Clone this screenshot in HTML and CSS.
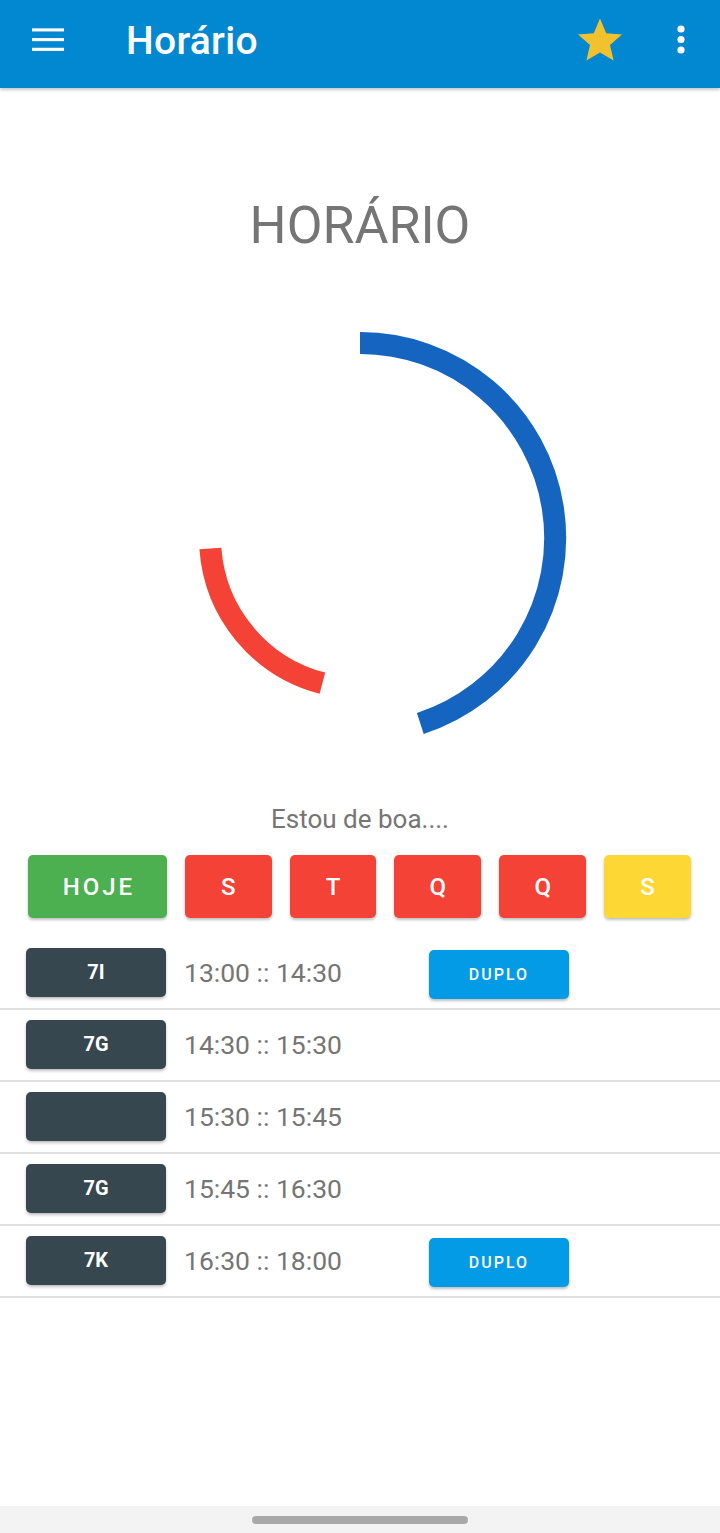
FILE: index.html
```
<!DOCTYPE html>
<html lang="pt">
<head>
<meta charset="utf-8">
<title>Horário</title>
<link rel="stylesheet" href="styles.css">
</head>
<body>
<div class="screen">
  <header class="topbar">
    <div class="menu-btn" aria-label="menu">
      <svg width="34" height="24" viewBox="0 0 34 24"><rect x="0" y="0" width="33" height="3.2" fill="#fff"/><rect x="0" y="10" width="33" height="3.2" fill="#fff"/><rect x="0" y="20" width="33" height="3.2" fill="#fff"/></svg>
    </div>
    <h1 class="title">Horário</h1>
    <div class="actions">
      <svg class="star" width="48" height="46" viewBox="0 0 24 23"><path d="M12 0.8l3.1 7.3 7.9 0.7-6 5.2 1.8 7.8L12 17.7l-6.8 4.1 1.8-7.8-6-5.2 7.9-0.7z" fill="#f2c12e"/></svg>
      <svg class="more" width="10" height="30" viewBox="0 0 10 30"><circle cx="5" cy="4" r="3.6" fill="#fff"/><circle cx="5" cy="14.5" r="3.6" fill="#fff"/><circle cx="5" cy="25" r="3.6" fill="#fff"/></svg>
    </div>
  </header>

  <main class="content">
    <h2 class="heading">HORÁRIO</h2>
    <div class="clock">
      <svg width="440" height="440" viewBox="0 0 440 440">
        <path d="M220 25 A195 195 0 0 1 280.3 405.5" fill="none" stroke="#1565c0" stroke-width="22"/>
        <path d="M70.4 230.5 A150 150 0 0 0 182.4 365.2" fill="none" stroke="#f44336" stroke-width="22"/>
      </svg>
    </div>
    <p class="status">Estou de boa....</p>
    <div class="days">
      <div class="day day-today">HOJE</div>
      <div class="day day-red">S</div>
      <div class="day day-red">T</div>
      <div class="day day-red">Q</div>
      <div class="day day-red">Q</div>
      <div class="day day-yellow">S</div>
    </div>
    <ul class="schedule">
      <li class="row"><span class="badge">7I</span><span class="time">13:00 :: 14:30</span><span class="duplo">DUPLO</span></li>
      <li class="row"><span class="badge">7G</span><span class="time">14:30 :: 15:30</span></li>
      <li class="row"><span class="badge"></span><span class="time">15:30 :: 15:45</span></li>
      <li class="row"><span class="badge">7G</span><span class="time">15:45 :: 16:30</span></li>
      <li class="row"><span class="badge">7K</span><span class="time">16:30 :: 18:00</span><span class="duplo">DUPLO</span></li>
    </ul>
  </main>

  <footer class="navbar"><div class="handle"></div></footer>
</div>
</body>
</html>
```

FILE: styles.css
```
* { box-sizing: border-box; }
html, body { margin: 0; padding: 0; }
body {
  font-family: Roboto, "Noto Sans", "Liberation Sans", sans-serif;
  background: #fff;
  width: 720px;
  height: 1533px;
  overflow: hidden;
}
.screen {
  width: 720px;
  height: 1533px;
  display: flex;
  flex-direction: column;
}
.topbar {
  height: 88px;
  flex: none;
  background: #0288d1;
  display: flex;
  align-items: center;
  box-shadow: 0 2px 3px rgba(0,0,0,0.22);
  position: relative;
  z-index: 2;
}
.menu-btn {
  width: 33px;
  margin-left: 32px;
  margin-top: -8px;
  display: flex;
}
.title {
  margin: -6px 0 0 61px;
  color: #fff;
  font-size: 39px;
  font-weight: 500;
  line-height: 44px;
  letter-spacing: 0.3px;
}
.actions {
  margin-left: auto;
  display: flex;
  align-items: center;
  margin-right: 34px;
  margin-top: -8px;
}
.star { margin-right: 52px; }
.content {
  flex: 1;
  display: flex;
  flex-direction: column;
  align-items: center;
}
.heading {
  margin: 108px 0 0;
  font-size: 52px;
  line-height: 60px;
  font-weight: 400;
  color: #757575;
}
.clock {
  margin-top: 62px;
  height: 440px;
  display: flex;
}
.status {
  margin: 46px 0 0;
  font-size: 26px;
  line-height: 30px;
  color: #757575;
}
.days {
  margin-top: 21px;
  width: 720px;
  padding: 0 29px 0 28px;
  display: flex;
  gap: 18px;
}
.day {
  height: 63px;
  width: 87px;
  border-radius: 5px;
  color: #fff;
  font-size: 24px;
  font-weight: 500;
  display: flex;
  align-items: center;
  justify-content: center;
  box-shadow: 0 2px 3px rgba(0,0,0,0.25);
}
.day-today { width: 139px; background: #4caf50; letter-spacing: 3px; padding-left: 3px; }
.day-red { background: #f44336; }
.day-yellow { background: #fdd835; }
.schedule {
  list-style: none;
  margin: 20px 0 0;
  padding: 0;
  width: 720px;
}
.row {
  height: 72px;
  border-bottom: 2px solid #e0e0e0;
  display: flex;
  align-items: center;
  padding-left: 26px;
  padding-bottom: 2px;
}
.badge {
  width: 140px;
  height: 49px;
  border-radius: 5px;
  background: #37474f;
  color: #fff;
  font-size: 20px;
  font-weight: 700;
  display: flex;
  align-items: center;
  justify-content: center;
  box-shadow: 0 2px 3px rgba(0,0,0,0.25);
}
.time {
  margin-left: 18px;
  font-size: 26.5px;
  color: #757575;
  width: 245px;
}
.duplo {
  margin-top: 4px;
  width: 140px;
  height: 49px;
  border-radius: 5px;
  background: #039be5;
  color: #fff;
  font-size: 16px;
  font-weight: 500;
  letter-spacing: 2px;
  display: flex;
  align-items: center;
  justify-content: center;
  box-shadow: 0 2px 3px rgba(0,0,0,0.25);
}
.navbar {
  height: 27px;
  flex: none;
  background: #f3f3f3;
  display: flex;
  align-items: center;
  justify-content: center;
}
.handle {
  width: 216px;
  height: 8px;
  border-radius: 4px;
  background: #a9a9a9;
}
```
